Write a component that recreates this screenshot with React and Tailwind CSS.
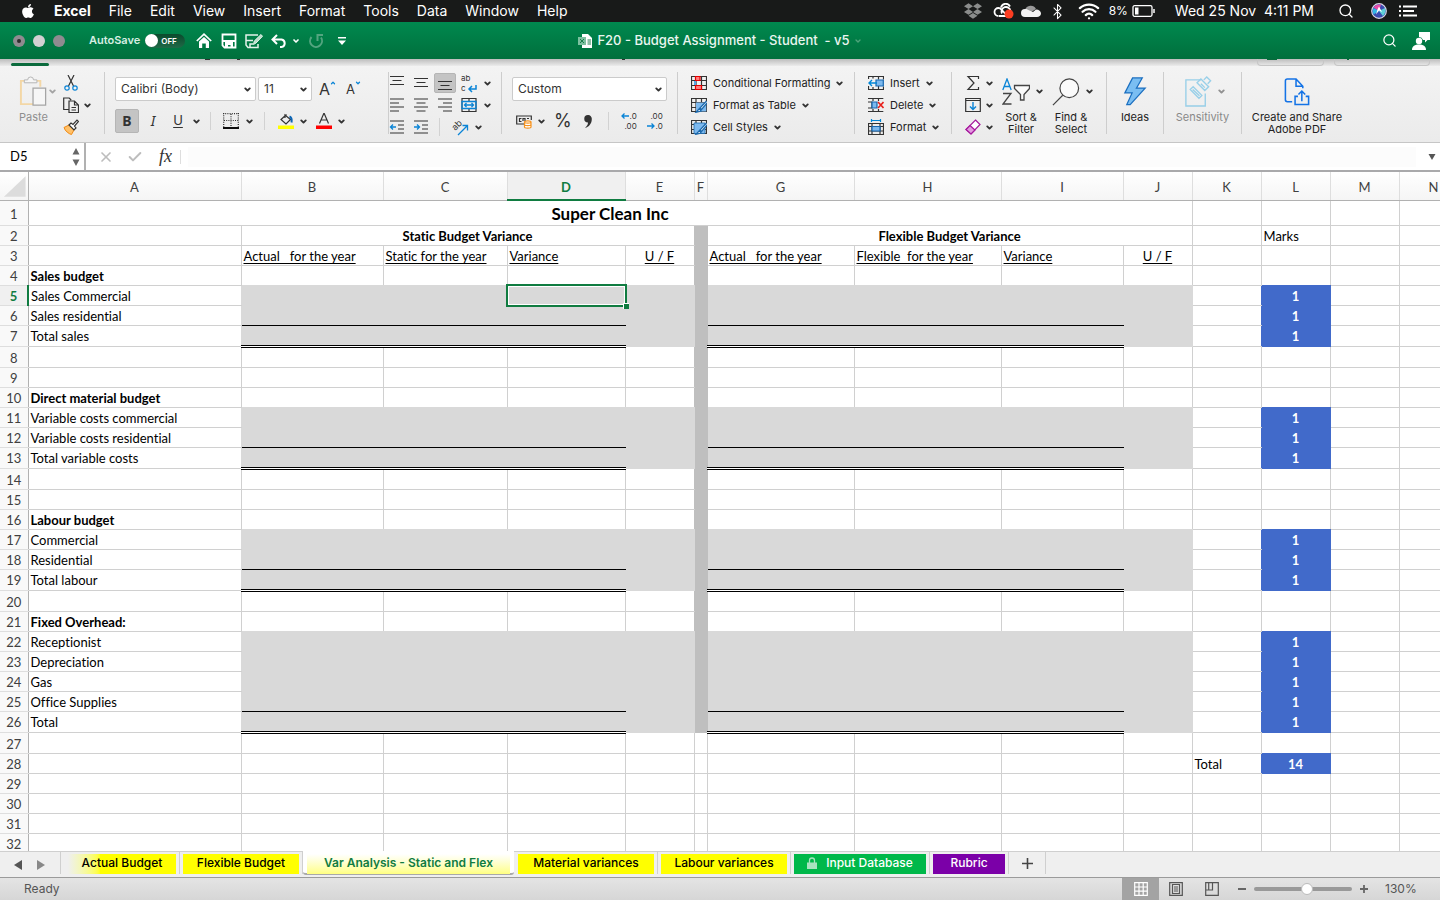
import { useState } from 'react';
import { FaApple, FaDropbox } from 'react-icons/fa';
import { Bluetooth, Check, ChevronDown, Search, Wifi, X } from 'lucide-react';

const GRID = '#d0d0d0';
const GREY = '#d9d9d9';
const BAND = '#bfbfbf';
const BLUE = '#416aca';

const COLUMNS = [
  { name: 'A', width: 213 },
  { name: 'B', width: 142 },
  { name: 'C', width: 124 },
  { name: 'D', width: 118 },
  { name: 'E', width: 69 },
  { name: 'F', width: 13 },
  { name: 'G', width: 147 },
  { name: 'H', width: 147 },
  { name: 'I', width: 122 },
  { name: 'J', width: 69 },
  { name: 'K', width: 69 },
  { name: 'L', width: 69 },
  { name: 'M', width: 69 },
  { name: 'N', width: 69 },
];

const BLOCKS = [
  [5, 7],
  [11, 13],
  [17, 19],
  [22, 26],
];

const LABELS = {
  4: 'Sales budget',
  5: 'Sales Commercial',
  6: 'Sales residential',
  7: 'Total sales',
  10: 'Direct material budget',
  11: 'Variable costs commercial',
  12: 'Variable costs residential',
  13: 'Total variable costs',
  16: 'Labour budget',
  17: 'Commercial',
  18: 'Residential',
  19: 'Total labour',
  21: 'Fixed Overhead:',
  22: 'Receptionist',
  23: 'Depreciation',
  24: 'Gas',
  25: 'Office Supplies',
  26: 'Total',
};

const HEADINGS = [4, 10, 16, 21];
const TALL_ROWS = [7, 8, 13, 14, 19, 20, 26, 27];

const SUBHEADS = {
  B: 'Actual   for the year',
  C: 'Static for the year',
  D: 'Variance',
  E: 'U / F',
  G: 'Actual   for the year',
  H: 'Flexible  for the year',
  I: 'Variance',
  J: 'U / F',
};

const MERGES = {
  1: { A: 10 },
  2: { B: 4, G: 4 },
};

const inBlock = (row) => BLOCKS.some(([from, to]) => row >= from && row <= to);
const isTotal = (row) => BLOCKS.some(([, to]) => to === row);

const fillOf = (row, col) => {
  if (!col) return null;
  if (col === 'F') return row >= 2 && row <= 26 ? BAND : null;
  if (col === 'L') return inBlock(row) || row === 28 ? BLUE : null;
  if ('BCDEGHIJ'.includes(col)) return inBlock(row) ? GREY : null;
  return null;
};

const textOf = (row, col) => {
  if (row === 1 && col === 'A') return 'Super Clean Inc';
  if (row === 2 && col === 'B') return 'Static Budget Variance';
  if (row === 2 && col === 'G') return 'Flexible Budget Variance';
  if (row === 2 && col === 'L') return 'Marks';
  if (row === 3) return SUBHEADS[col];
  if (row === 28 && col === 'K') return 'Total';
  if (row === 28 && col === 'L') return '14';
  if (col === 'A') return LABELS[row];
  if (col === 'L' && inBlock(row)) return '1';
  return null;
};

const textClass = (row, col) => {
  if (row === 1) return 'text-center text-[17px] font-bold';
  if (row === 2 && col !== 'L') return 'text-center text-[13px] font-bold';
  if (row === 3) return `text-[13px] underline underline-offset-2 ${col === 'E' || col === 'J' ? 'text-center' : 'text-left'}`;
  if (col === 'L' && row !== 2) return 'text-center text-[13px] font-bold text-white';
  if (HEADINGS.includes(row)) return 'text-left text-[13px] font-bold';
  return 'text-left text-[13px]';
};

const Cell = ({ row, index }) => {
  const col = COLUMNS[index].name;
  const span = MERGES[row]?.[col] ?? 1;
  const next = COLUMNS[index + span]?.name;
  const fill = fillOf(row, col);
  const ruled = 'BCDGHI'.includes(col);

  let bottom = `1px solid ${fillOf(row + 1, col) || fill || GRID}`;
  if (ruled && isTotal(row + 1)) bottom = '1px solid #000';
  if (ruled && isTotal(row)) bottom = '3px double #000';

  return (
    <td
      colSpan={span}
      className={`relative overflow-visible whitespace-pre px-[2px] pb-0 align-middle leading-4 ${isTotal(row) ? 'pt-0' : 'pt-[2px]'} ${textClass(row, col)}`}
      style={{
        backgroundColor: fill || '#fff',
        borderRight: `1px solid ${fill || fillOf(row, next) || GRID}`,
        borderBottom: bottom,
      }}
    >
      {textOf(row, col)}
      {row === 5 && col === 'D' && (
        <span className="absolute -inset-[2px] z-10 border-2 border-[#107c41] outline-1 -outline-offset-[3px] outline-white">
          <span className="absolute -bottom-[4px] -right-[4px] size-[6px] border-l border-t border-white bg-[#107c41]" />
        </span>
      )}
    </td>
  );
};

const SheetRow = ({ row }) => {
  const cells = [];
  for (let i = 0; i < COLUMNS.length; i += MERGES[row]?.[COLUMNS[i].name] ?? 1) {
    cells.push(<Cell key={i} row={row} index={i} />);
  }
  let height = 'h-5';
  if (row === 1) height = 'h-[25px]';
  if (TALL_ROWS.includes(row)) height = 'h-[21px]';

  return (
    <tr className={height}>
      <th
        scope="row"
        className={`border-b border-b-[#dedede] px-0 pb-0 text-center text-[13px] leading-4 ${isTotal(row) ? 'pt-0' : 'pt-[2px]'} ${
          row === 5
            ? 'border-r-2 border-r-[#107c41] bg-[#f0f0f0] font-bold text-[#107c41]'
            : 'border-r border-r-[#b1b1b1] bg-[#f9f9f9] font-normal text-[#404040]'
        }`}
      >
        {row}
      </th>
      {cells}
    </tr>
  );
};

const Sheet = () => (
  <main className="min-h-0 flex-1 overflow-hidden bg-white font-['Lato','Liberation_Sans',sans-serif] text-black [font-variant-ligatures:none]">
    <table className="w-[1467px] table-fixed border-collapse">
      <colgroup>
        <col className="w-7" />
        {COLUMNS.map((col) => (
          <col key={col.name} style={{ width: col.width }} />
        ))}
      </colgroup>
      <thead>
        <tr className="h-7 bg-linear-to-b from-white to-[#f5f5f5]">
          <th className="border-b border-r border-[#b1b1b1] p-0">
            <svg viewBox="0 0 28 27" className="block h-[27px] w-full" aria-label="Select all">
              <path d="M26 4v21H4z" fill="#dcdcdc" />
            </svg>
          </th>
          {COLUMNS.map((col) => (
            <th
              key={col.name}
              scope="col"
              className={`border-r border-r-[#dedede] px-0 pb-0 pt-[2px] text-center text-[13px] leading-4 ${
                col.name === 'D'
                  ? 'border-b-2 border-b-[#107c41] bg-[#f0f0f0] font-bold text-[#107c41]'
                  : 'border-b border-b-[#b1b1b1] font-normal text-[#404040]'
              }`}
            >
              {col.name}
            </th>
          ))}
        </tr>
      </thead>
      <tbody>
        {Array.from({ length: 32 }, (_, i) => (
          <SheetRow key={i} row={i + 1} />
        ))}
      </tbody>
    </table>
  </main>
);

const MENUS = ['File', 'Edit', 'View', 'Insert', 'Format', 'Tools', 'Data', 'Window', 'Help'];

const MenuBar = () => (
  <header className="flex h-[22px] shrink-0 items-center bg-[#181a19] text-[14px] leading-5 text-white">
    <FaApple className="ml-5 size-4" />
    <nav className="ml-[18px] flex gap-[18px]">
      <button type="button" className="font-bold">Excel</button>
      {MENUS.map((menu) => (
        <button key={menu} type="button">{menu}</button>
      ))}
    </nav>
    <div className="ml-auto flex items-center">
      <FaDropbox className="size-[18px] text-[#8b8d8c]" />
      <svg viewBox="0 0 22 16" className="ml-[11px] h-4 w-[22px]" fill="none" aria-label="Creative Cloud">
        <path d="M5.5 13a4 4 0 0 1 0-8c1 0 2 .5 3 1.5l4 4.5M9 10.5a4.500 4.500 0 1 1 4 2.500H6M8 4.500a4.800 4.800 0 0 1 9-1" stroke="#fff" strokeWidth="1.8" />
        <circle cx="16" cy="11" r="4.5" fill="#fc3d21" />
      </svg>
      <svg viewBox="0 0 20 14" className="ml-[6px] h-[14px] w-5" aria-label="OneDrive">
        <path d="M4 6a6 6 0 0 1 11-1l-8 5z" fill="#9a9a9a" />
        <path d="M4 13a4 4 0 0 1 0-8c2 0 3 .6 4.500 1.500L12 8l3-2.500c3 0 5 1.800 5 4S18 13 16 13z" fill="#f4f4f4" />
      </svg>
      <Bluetooth className="ml-2 size-[17px]" strokeWidth={1.5} />
      <Wifi className="ml-3 size-[22px]" strokeWidth={2.5} />
      <span className="ml-[9px] text-[12px]">8%</span>
      <svg viewBox="0 0 24 12" className="ml-1 h-3 w-6" fill="none" aria-label="Battery">
        <rect x="1" y=".7" width="19" height="10.6" rx="1.5" stroke="#fff" strokeWidth="1.3" />
        <path d="M3 2.5h3.500v7H3z" fill="#fff" />
        <path d="M22 4v4" stroke="#fff" strokeWidth="1.5" />
      </svg>
      <span className="ml-[19px] whitespace-pre text-[14px]">Wed 25 Nov  4:11 PM</span>
      <Search className="ml-6 size-4" strokeWidth={2} />
      <svg viewBox="0 0 16 16" className="ml-[17px] size-4" aria-label="Siri">
        <circle cx="8" cy="8" r="7.3" fill="#3b4bb0" stroke="#d9d9e6" strokeWidth="1.2" />
        <path d="M8 8 2.500 4.500Q5 1 10 1.500z" fill="#e84aa8" />
        <path d="M8 8 2.500 11.500Q.8 8 2.500 5z" fill="#35b7e6" />
        <path d="M8 8l6-3Q15.500 9 12 13z" fill="#5fd0d8" />
        <path d="M8 3.500 11 9 8 7.500 5 11.500l1.500-5z" fill="#fff" />
      </svg>
      <svg viewBox="0 0 18 12" className="ml-3 mr-[23px] h-3 w-[18px]" stroke="#fff" strokeWidth="1.8" aria-label="Notifications">
        <path d="M0 1.500h2M0 6h2M0 10.500h2M4 1.500h14M4 6h11M4 10.500h14" />
      </svg>
    </div>
  </header>
);

const TitleBar = () => (
  <div className="grid h-[37px] shrink-0 grid-cols-[1fr_auto_1fr] items-center bg-linear-to-b from-[#00894f] to-[#006f3c] text-white">
    <div className="flex items-center">
      <span className="ml-[13px] flex size-3 items-center justify-center rounded-full bg-[#8f8b90]">
        <span className="size-1 rounded-full bg-[#2d2d2d]" />
      </span>
      <span className="ml-2 size-3 rounded-full bg-[#d2d0d2]" />
      <span className="ml-2 size-3 rounded-full bg-[#8f8b90]" />
      <label htmlFor="autosave" className="ml-6 text-[11px] font-semibold text-[#d7eee2]">AutoSave</label>
      <span className="relative ml-[5px] flex h-[14px] w-10 items-center rounded-full bg-linear-to-b from-[#0b4a2d] to-[#1f6a47]">
        <input id="autosave" type="checkbox" role="switch" className="absolute inset-0 appearance-none" />
        <span className="size-[13px] rounded-full bg-white" />
        <span className="ml-[3px] text-[8px] font-semibold">OFF</span>
      </span>
      <button type="button" aria-label="Home" className="ml-[11px]">
        <svg viewBox="0 0 16 16" className="size-4" fill="none">
          <path d="M.8 8 8 1.200 15.200 8" stroke="#fff" strokeWidth="1.7" />
          <path d="M3 8.500 8 4l5 4.500V15H9.800v-4.500H6.200V15H3z" fill="#fff" />
        </svg>
      </button>
      <button type="button" aria-label="Save" className="ml-[9px]">
        <svg viewBox="0 0 16 16" className="size-4" fill="none" stroke="#fff" strokeWidth="1.8">
          <path d="M1.500 1.500h13v13h-11l-2-2zM1.500 8h13" />
          <path d="M4 9h8v6H9.500v-3H7v3H4z" fill="#fff" stroke="none" />
        </svg>
      </button>
      <button type="button" aria-label="Save as" className="ml-2">
        <svg viewBox="0 0 18 16" className="h-4 w-[18px]" fill="none" stroke="#e3f2ea" strokeWidth="1.5">
          <path d="M13 2H1v10l2 2.500h10V11M1 7.500h7M5 14v-3h3" />
          <path d="M8.500 11.500 9.300 8 16 1.500l1.500 1.800L11 10z" fill="#b9dcc9" strokeWidth="1" />
        </svg>
      </button>
      <button type="button" aria-label="Undo" className="ml-2">
        <svg viewBox="0 0 16 14" className="h-[14px] w-4" fill="none" stroke="#fff" strokeWidth="2">
          <path d="M6 1 1.500 5.500 6 10M2 5.500h8.500a3.800 3.800 0 0 1 0 7.500H9" />
        </svg>
      </button>
      <ChevronDown className="ml-[5px] size-2" strokeWidth={5} />
      <button type="button" aria-label="Redo" className="ml-2">
        <svg viewBox="0 0 16 16" className="size-4" fill="none" stroke="#54a580" strokeWidth="2">
          <path d="M3.500 4a6 6 0 1 0 9.500.5M9.500 8V2H15" />
        </svg>
      </button>
      <button type="button" aria-label="Customize toolbar" className="ml-[14px]">
        <svg viewBox="0 0 8 8" className="size-2" fill="#fff">
          <path d="M0 0h8v1.500H0zM0 3.500h8L4 8z" />
        </svg>
      </button>
    </div>
    <h1 className="flex items-center whitespace-pre text-[13px] font-medium text-[#eaf6f0]">
      <svg viewBox="0 0 14 14" className="mr-[5px] size-[14px]" aria-hidden="true">
        <path d="M4 0h6l4 4v10H4z" fill="#fff" />
        <path d="M0 3h8v8H0z" fill="#7cc09f" />
        <path d="m2 5 4 4m0-4L2 9M9.500 6H13M9.500 8H13M9.500 10H13" stroke="#1c7d4c" />
      </svg>
      F20 - Budget Assignment - Student  - v5
      <ChevronDown className="ml-1 size-2 text-[#4fa37b]" strokeWidth={4} />
    </h1>
    <div className="flex items-center justify-end gap-[15px] pr-[10px]">
      <Search className="size-[15px]" strokeWidth={2} />
      <svg viewBox="0 0 18 18" className="size-[18px]" fill="#fff" aria-label="Share">
        <path d="M7 0h11v8h-2.500L13 10.500V8H11A4.500 4.500 0 0 0 7 5z" />
        <circle cx="7" cy="9" r="3.2" />
        <path d="M0 18c0-4 3-5.500 7-5.500s7 1.500 7 5.500z" />
      </svg>
    </div>
  </div>
);

const Chevron = ({ className = '' }) => (
  <ChevronDown className={`size-[9px] shrink-0 text-[#333] ${className}`} strokeWidth={5} />
);

const Divider = () => <span className="h-[62px] w-px shrink-0 bg-[#cdcdcd]" />;
const SmallDivider = ({ className }) => <span className={`h-[18px] w-px shrink-0 bg-[#d2d2d2] ${className}`} />;

const Lines = ({ d, children }) => (
  <svg viewBox="0 0 16 16" className="size-4" fill="none" stroke="#333" strokeWidth="1.2">
    <path d={d} />
    {children}
  </svg>
);

const Picker = ({ label, value, className }) => (
  <span className={`relative flex h-6 items-center ${className}`}>
    <select
      aria-label={label}
      defaultValue={value}
      className="h-full w-full appearance-none rounded-[2px] border border-[#cbcbcb] bg-white pl-[5px] text-[12px] text-[#333]"
    >
      <option>{value}</option>
    </select>
    <Chevron className="pointer-events-none absolute right-1" />
  </span>
);

const GRID_FRAME = 'M.5 1.500h15v13H.5zM.5 5.500h15M.5 10.500h15M5 1.500v13M10.500 1.500v13';

const CondIcon = () => (
  <Lines d={GRID_FRAME}>
    <path d="M4.500 1.500H9v4H4.500zM4.500 10.500h6v4h-6z" fill="#ff8080" stroke="#e80000" />
    <path d="M3 6h2v4H3z" fill="#58a6e8" stroke="none" />
  </Lines>
);
const TableIcon = () => (
  <Lines d={GRID_FRAME}>
    <path d="M5 5.500h10.300v9H5z" fill="#7db9ee" stroke="none" />
    <path d="M15.500 4 9 11l1.500 1.500L16 6M8.500 11.500 5 15.300l5-1.300z" fill="#fff" stroke="#1b69ad" />
  </Lines>
);
const StyleIcon = () => (
  <Lines d={GRID_FRAME}>
    <path d="M3 4h11v10.500H3z" fill="#7db9ee" stroke="#1b69ad" strokeWidth=".8" />
    <path d="M15.500 4 9 11l1.500 1.500L16 6M8.500 11.500 5 15.300l5-1.300z" fill="#fff" stroke="#1b69ad" />
  </Lines>
);
const InsertIcon = () => (
  <Lines d="M.5 4V1.500h15v3M.5 11v3.500h15v-3M5 1.500v2M10.500 1.500v3M5 12v2.500M10.500 11v3.500">
    <path d="M8 5h7.300v6H8z" fill="#7db9ee" stroke="#1667b0" />
    <path d="M9 8H1M4 5 1 8l3 3" stroke="#0086d8" strokeWidth="1.4" />
  </Lines>
);
const DeleteIcon = () => (
  <Lines d="M0 1.500h15.300M0 14.500h15.300M5 1.500V4M10.500 1.500V4M5 12v2.500M10.500 12v2.500M0 5h4v6H0">
    <path d="M4 5h5v6H4z" fill="#7db9ee" stroke="#1667b0" />
    <path d="m10 5 5.500 6M15.500 5 10 11" stroke="#e8201c" strokeWidth="1.6" />
  </Lines>
);
const FormatIcon = () => (
  <Lines d="M.5 4.500h15v11H.5zM.5 7.500h15M.5 12h15M4 4.500v11M12 4.500v11">
    <path d="M4 7.500h8V12H4z" fill="#7db9ee" stroke="#1667b0" />
    <path d="M3.500 1.500h9M3.500 0v3M12.500 0v3" stroke="#0086d8" />
  </Lines>
);

const STYLE_ITEMS = [
  { label: 'Conditional Formatting', Icon: CondIcon },
  { label: 'Format as Table', Icon: TableIcon },
  { label: 'Cell Styles', Icon: StyleIcon },
];
const CELL_ITEMS = [
  { label: 'Insert', Icon: InsertIcon },
  { label: 'Delete', Icon: DeleteIcon },
  { label: 'Format', Icon: FormatIcon },
];

const ItemList = ({ items, className }) => (
  <div className={`shrink-0 pl-[13px] ${className}`}>
    {items.map(({ label, Icon }) => (
      <button key={label} type="button" className="flex h-[22px] items-center whitespace-nowrap text-[11px] text-[#222]">
        <Icon />
        <span className="ml-[6px]">{label}</span>
        <Chevron className="ml-[5px]" />
      </button>
    ))}
  </div>
);

const BigButton = ({ label, chevron, faded, className, children }) => (
  <button type="button" className={`flex shrink-0 flex-col items-center pt-1 ${faded ? 'opacity-50' : ''} ${className}`}>
    <span className={`flex h-[31px] items-center ${chevron ? 'pl-1' : ''}`}>
      {children}
      {chevron && <Chevron className="ml-[5px]" />}
    </span>
    <span className="mt-1 whitespace-pre text-center text-[11px] leading-3 text-[#222]">{label}</span>
  </button>
);

const Ribbon = () => (
  <section className="shrink-0 border-b border-[#c6c6c6] bg-linear-to-b from-[#f4f4f4] to-[#ebebeb]">
    <div className="flex h-[7px] items-start bg-linear-to-b from-[#bdbdbd] to-[#ececec]">
      <span className="ml-[11px] mt-1 h-[3px] w-[38px] rounded-full bg-[#0b6b3d]" />
      <span className="ml-[156px] h-px w-[5px] bg-[#333]" />
      <span className="ml-[27px] h-px w-[3px] bg-[#333]" />
      <span className="ml-[382px] h-px w-[3px] bg-[#333]" />
      <span className="ml-auto h-[7px] w-[67px] rounded-b border border-t-0 border-[#c6c6c6] pl-[9px]">
        <span className="block h-px w-[10px] bg-[#0b6b3d]" />
      </span>
      <span className="ml-[10px] mr-[10px] h-[7px] w-24 rounded-b border border-t-0 border-[#c6c6c6] pl-3">
        <span className="block h-px w-[2px] bg-[#0b6b3d]" />
      </span>
    </div>
    <div className="flex h-[76px] items-start overflow-hidden pt-[6px]">
      <div className="flex w-[104px] shrink-0">
        <button type="button" className="flex w-[51px] flex-col items-center pl-4 pt-1">
          <svg viewBox="0 0 30 32" className="h-[31px] w-[30px] shrink-0" fill="none">
            <path d="M5 5H1.500v24H14M18 5h3.500v6" stroke="#f3d7a6" strokeWidth="2" />
            <path d="M5 7V4h3.500a3 3 0 0 1 6 0H18v3z" stroke="#b5b5b5" fill="#f6f6f6" />
            <path d="M14 12.500h13V30H14z" stroke="#a5a5a5" fill="#f6f6f6" strokeWidth="1.3" />
          </svg>
          <span className="mt-1 text-[11px] leading-3 text-[#8e8e8e]">Paste</span>
        </button>
        <Chevron className="-ml-[3px] mt-[15px] opacity-40" />
        <div className="ml-[6px]">
          <button type="button" aria-label="Cut" className="flex h-[22px] items-center">
            <Lines d="M5 0l5.500 11M11 0 5.500 11">
              <circle cx="4" cy="13" r="2.2" stroke="#0a84d6" />
              <circle cx="12" cy="13" r="2.2" stroke="#0a84d6" />
            </Lines>
          </button>
          <button type="button" aria-label="Copy" className="flex h-[22px] items-center">
            <Lines d="M6 12.500H.7V1h5.500l2 2M6 4h5.500l4 4v7.500H6zM11.500 4v4h4M8.500 10.500h4.500M8.500 13h4.500" />
            <Chevron className="ml-1" />
          </button>
          <button type="button" aria-label="Format painter" className="flex h-[22px] items-center">
            <svg viewBox="0 0 16 16" className="size-4" fill="none">
              <path d="M1 8.500 6 6l5 5-2.500 4.500C6 15 2 12 1 8.500z" fill="#ffc069" stroke="#f08a12" />
              <path d="m6 6 2-2 2 1.500L14 1l1.500 1.500L11.500 7 13 9l-2 2z" fill="#fff" stroke="#333" strokeWidth="1.2" />
            </svg>
          </button>
        </div>
      </div>
      <Divider />
      <div className="w-[283px] shrink-0 pl-[10px] pt-[5px]">
        <div className="flex items-center">
          <Picker label="Font" value="Calibri (Body)" className="w-[141px]" />
          <Picker label="Font size" value="11" className="ml-[2px] w-[54px]" />
          <button type="button" aria-label="Increase font size" className="ml-[7px] flex text-[16px] leading-6 text-[#333]">
            A<ChevronDown className="mt-[3px] size-[6px] rotate-180 text-[#0a84d6]" strokeWidth={5} />
          </button>
          <button type="button" aria-label="Decrease font size" className="ml-[10px] flex text-[13px] leading-6 text-[#333]">
            A<ChevronDown className="mt-[3px] size-[6px] text-[#0a84d6]" strokeWidth={5} />
          </button>
        </div>
        <div className="mt-2 flex items-center text-[#333]">
          <button type="button" className="h-6 w-6 rounded-[2px] border border-[#b5b5b5] bg-[#c4c4c4] font-['Noto_Sans',sans-serif] text-[14px] font-bold leading-5">B</button>
          <button type="button" className="ml-1 w-5 font-['Noto_Sans',sans-serif] text-[14px] italic leading-5">I</button>
          <button type="button" className="ml-[5px] w-5 text-[13px] underline underline-offset-2">U</button>
          <Chevron className="ml-1" />
          <SmallDivider className="ml-[9px]" />
          <button type="button" aria-label="Borders" className="ml-3">
            <Lines d="M0 15h16">
              <path d="M.7 0v14M15.300 0v14M0 .7h16M8 1v13M1 7.500h14" strokeDasharray="1 1.2" />
              <path d="M0 15h16" stroke="#000" strokeWidth="1.8" />
            </Lines>
          </button>
          <Chevron className="ml-[6px]" />
          <SmallDivider className="ml-[10px]" />
          <button type="button" aria-label="Fill color" className="ml-[13px]">
            <Lines d="M8.500 1.500 3 6.500l5 4.500 4.500-4.500L7 2v3">
              <path d="M11.500 3.500c2.500 1 2.500 3 2 6" stroke="#0a64b5" strokeWidth="2" />
              <path d="M0 12.500h16V16H0z" fill="#ff0" stroke="none" />
            </Lines>
          </button>
          <Chevron className="ml-[5px]" />
          <button type="button" aria-label="Font color" className="ml-2">
            <Lines d="M3.500 10.500 8 0l4.500 10.500M5 7h6">
              <path d="M0 12.500h16V16H0z" fill="#f00" stroke="none" />
            </Lines>
          </button>
          <Chevron className="ml-[5px]" />
        </div>
      </div>
      <Divider />
      <div className="w-[112px] shrink-0">
        <div className="flex h-[22px] items-center gap-2">
          <button type="button" aria-label="Top align"><Lines d="M1 1.500h14M3.500 5.500h9M1 9.500h14" /></button>
          <button type="button" aria-label="Middle align"><Lines d="M1 3.500h14M3.500 7.500h9M1 11.500h14" /></button>
          <button type="button" aria-label="Bottom align" className="-mx-[3px] flex h-5 w-[22px] items-center justify-center rounded-[2px] border border-[#b5b5b5] bg-[#c4c4c4]">
            <Lines d="M1 6.500h14M3.500 10.500h9M1 14.500h14" />
          </button>
          <button type="button" aria-label="Wrap text" className="relative flex h-5 w-4 flex-col items-start text-[8px] leading-[10px] text-[#333]">
            <span>ab</span>
            <span>c</span>
            <svg viewBox="0 0 10 8" className="absolute bottom-0 right-0 h-2 w-[10px]" fill="none" stroke="#0a84d6" strokeWidth="1.5">
              <path d="M9 0v4H2M5 1 2 4l3 3" />
            </svg>
          </button>
          <Chevron className="-ml-[2px]" />
        </div>
        <div className="flex h-[22px] items-center gap-2">
          <button type="button" aria-label="Align left"><Lines d="M1 2h14M1 6h9M1 10h14M1 14h9" /></button>
          <button type="button" aria-label="Center"><Lines d="M1 2h14M3.500 6h9M1 10h14M3.500 14h9" /></button>
          <button type="button" aria-label="Align right"><Lines d="M1 2h14M6 6h9M1 10h14M6 14h9" /></button>
          <button type="button" aria-label="Merge cells">
            <Lines d="M1 1.500h14v13H1zM8 1.500v3M8 11.500v3">
              <path d="M1 4.500h14v7H1zM3.500 8h9M5.500 6l-2 2 2 2M10.500 6l2 2-2 2" stroke="#0a84d6" strokeWidth="1.3" />
            </Lines>
          </button>
          <Chevron className="-ml-[2px]" />
        </div>
        <div className="flex h-[22px] items-center gap-2">
          <button type="button" aria-label="Decrease indent">
            <Lines d="M1 2h14M9 6h6M9 10h6M1 14h14"><path d="M7 8H1.500M4 5.500 1.500 8 4 10.500" stroke="#0a84d6" strokeWidth="1.3" /></Lines>
          </button>
          <button type="button" aria-label="Increase indent">
            <Lines d="M1 2h14M9 6h6M9 10h6M1 14h14"><path d="M1 8h5.500M4 5.500 6.500 8 4 10.500" stroke="#0a84d6" strokeWidth="1.3" /></Lines>
          </button>
          <SmallDivider className="ml-[2px]" />
          <button type="button" aria-label="Orientation" className="ml-[3px]">
            <svg viewBox="0 0 18 18" className="size-[18px] overflow-visible" fill="none">
              <text x="1" y="11" transform="rotate(-45 5 8)" fontSize="9" fill="#333">ab</text>
              <path d="M7 17 16 8M11.500 7.500H16.500V12.500" stroke="#0a84d6" strokeWidth="1.3" />
            </svg>
          </button>
          <Chevron className="-ml-[3px]" />
        </div>
      </div>
      <Divider />
      <div className="w-[175px] shrink-0 pl-[10px] pt-[5px]">
        <Picker label="Number format" value="Custom" className="w-[155px]" />
        <div className="mt-2 flex h-6 items-center text-[#333]">
          <button type="button" aria-label="Currency" className="ml-1">
            <Lines d="M8 11H.7V3h14.600v4M5.500 5.500H3.500v3h2M9 8V5.500H7V8M11 5.500h2">
              <path d="M8.500 9v5c0 1.500 6.500 1.500 6.500 0V9c0-1.500-6.500-1.500-6.500 0c0 1.500 6.500 1.500 6.500 0M8.500 11.500c0 1.500 6.500 1.500 6.500 0" fill="#fff" stroke="#f7931e" />
            </Lines>
          </button>
          <Chevron className="ml-[5px]" />
          <button type="button" className="ml-2 text-[18px] leading-6">%</button>
          <button type="button" aria-label="Comma style" className="ml-3">
            <svg viewBox="0 0 8 13" className="h-[13px] w-2" fill="#333">
              <path d="M4 0a3.700 3.700 0 0 1 3.800 4C7.800 8.500 5 12 1 13c2-2 3-3.500 3-5.500A3.700 3.700 0 0 1 4 0z" />
            </svg>
          </button>
          <SmallDivider className="ml-4" />
          <button type="button" aria-label="Increase decimal" className="relative ml-3 flex w-4 flex-col items-end text-[8px] leading-[10px]">
            <span>.0</span>
            <span>.00</span>
            <svg viewBox="0 0 8 6" className="absolute left-0 top-[2px] h-[6px] w-2" fill="none" stroke="#0a84d6" strokeWidth="1.3"><path d="M8 3H1M3.500.5 1 3l2.500 2.500" /></svg>
          </button>
          <button type="button" aria-label="Decrease decimal" className="relative ml-[10px] flex w-4 flex-col items-end text-[8px] leading-[10px]">
            <span>.00</span>
            <span>.0</span>
            <svg viewBox="0 0 8 6" className="absolute bottom-[2px] left-0 h-[6px] w-2" fill="none" stroke="#0a84d6" strokeWidth="1.3"><path d="M0 3h7M4.500.5 7 3 4.500 5.500" /></svg>
          </button>
        </div>
      </div>
      <Divider />
      <ItemList items={STYLE_ITEMS} className="w-[176px]" />
      <Divider />
      <ItemList items={CELL_ITEMS} className="w-24" />
      <Divider />
      <div className="flex w-[154px] shrink-0 pl-[13px]">
        <div>
          <button type="button" aria-label="AutoSum" className="flex h-[22px] items-center">
            <Lines d="M13.500 4V1.500H3L9 8l-6 6.500h10.500V12" />
            <Chevron className="ml-1" />
          </button>
          <button type="button" aria-label="Fill" className="flex h-[22px] items-center">
            <Lines d="M.7 1.500h14.600v13H.7zM.7 3.500h14.600">
              <path d="M8 5v7.500M5 9.500l3 3 3-3" stroke="#0a84d6" strokeWidth="1.4" />
            </Lines>
            <Chevron className="ml-1" />
          </button>
          <button type="button" aria-label="Clear" className="flex h-[22px] items-center">
            <svg viewBox="0 0 16 16" className="size-4" fill="none" stroke="#a5189c" strokeWidth="1.2">
              <path d="M10.500 1 15 5.500 6 15 1 10.500z" fill="#fff" />
              <path d="M5 6.500 10 11 6 15 1 10.500z" fill="#e39ae0" />
            </svg>
            <Chevron className="ml-1" />
          </button>
        </div>
        <BigButton label={'Sort &\nFilter'} chevron className="ml-[5px] w-11">
          <svg viewBox="0 0 28 28" className="size-7 shrink-0" fill="none" strokeWidth="1.3">
            <path d="M.8 12 5 1l4.200 11M2.300 8.500h5.400" stroke="#0a84d6" />
            <path d="M1 15.500h8L1 26h8.500" stroke="#444" />
            <path d="M12.500 7.500h15v3l-5.500 6V22h-3.500v-5.500l-6-6z" stroke="#444" fill="#fafafa" />
          </svg>
        </BigButton>
        <BigButton label={'Find &\nSelect'} chevron className="ml-[6px] w-11">
          <svg viewBox="0 0 30 30" className="size-7 shrink-0" fill="none" stroke="#444" strokeWidth="1.3">
            <circle cx="18.5" cy="11" r="10" fill="#fafafa" />
            <path d="M11.500 18.500 1 29" />
          </svg>
        </BigButton>
      </div>
      <Divider />
      <BigButton label="Ideas" className="w-[56px]">
        <svg viewBox="0 0 24 30" className="h-[29px] w-6">
          <path d="M9.500 1h10l-6 10.500h9L7 28.500H3.500L9 16.500H1.500z" fill="#7abef2" stroke="#1b6fc0" strokeWidth="1.3" />
        </svg>
      </BigButton>
      <Divider />
      <BigButton label="Sensitivity" chevron faded className="w-[77px]">
        <svg viewBox="0 0 28 32" className="h-[31px] w-7" fill="none" stroke="#42b0e2" strokeWidth="1.4">
          <path d="M17 4H1.500v27h20V18" />
          <path d="m6 14 3-3 9 9-3 3zM8.500 14l7 6.500M13 7l4-4 8 8-4 4zM20 4l3-3 4 4-3 3M17 8l4 4" />
        </svg>
      </BigButton>
      <Divider />
      <BigButton label={'Create and Share\nAdobe PDF'} className="w-[110px]">
        <svg viewBox="0 0 26 30" className="mt-[2px] h-[29px] w-[26px]" fill="none" stroke="#1473e6" strokeWidth="1.6">
          <path d="M8 24.500H3A2 2 0 0 1 1 22.500V3A2 2 0 0 1 3 1h9l7 7.500v2M12 1v7.500h7" />
          <path d="M14 19h-3v8.500h14V19h-3M18 24V13.500M14.500 17 18 13.500l3.500 3.500" />
        </svg>
      </BigButton>
    </div>
  </section>
);

const FormulaBar = () => (
  <div className="flex h-7 shrink-0 items-center border-b border-[#a9a9ab] bg-white">
    <div className="flex h-full w-[86px] items-center border-r-2 border-[#b1b1b1] pr-1">
      <input aria-label="Name box" defaultValue="D5" className="min-w-0 flex-1 pl-[10px] font-['Lato',sans-serif] text-[13px] text-black" />
      <svg viewBox="0 0 8 18" className="h-[18px] w-2" fill="#666" aria-hidden="true">
        <path d="M4 0l3.500 6.500h-7zM4 18l3.500-6.500h-7z" />
      </svg>
    </div>
    <button type="button" aria-label="Cancel" className="ml-3"><X className="size-4 text-[#bdbdbd]" strokeWidth={2.5} /></button>
    <button type="button" aria-label="Enter" className="ml-[13px]"><Check className="size-4 text-[#bdbdbd]" strokeWidth={3} /></button>
    <button type="button" className="ml-4 font-['Liberation_Serif',serif] text-[18px] italic text-[#333]">fx</button>
    <span className="ml-2 h-[14px] w-px bg-[#dedede]" />
    <input aria-label="Formula" className="ml-[7px] h-5 min-w-0 flex-1 bg-[#fcfcfc]" />
    <svg viewBox="0 0 8 6" className="ml-3 mr-1 h-[6px] w-2" fill="#555" aria-hidden="true">
      <path d="M.5 0h7L4 6z" />
    </svg>
  </div>
);

const TABS = [
  { name: 'Actual Budget', look: 'w-[108px] bg-linear-to-r from-[#efefef] via-[#ff0] via-30% to-[#ff0] text-black' },
  { name: 'Flexible Budget', look: 'w-[116px] bg-[#ff0] text-black' },
  { name: 'Var Analysis - Static and Flex', look: 'w-[203px] bg-linear-to-b from-white to-[#ffff80] text-[#107c41]' },
  { name: 'Material variances', look: 'w-[136px] bg-[#ff0] text-black' },
  { name: 'Labour variances', look: 'w-[126px] bg-[#ff0] text-black' },
  { name: 'Input Database', look: 'w-[132px] bg-[#00b84a] text-white', locked: true },
  { name: 'Rubric', look: 'w-[72px] bg-[#7b00a8] text-white' },
];

const SheetTabs = ({ active, onSelect }) => (
  <nav className="flex h-[26px] shrink-0 items-start border-t border-[#cfcfcf] bg-[#efefef]" aria-label="Sheets">
    <button type="button" aria-label="Previous sheet" className="ml-[14px] mt-2">
      <svg viewBox="0 0 8 10" className="h-[10px] w-2" fill="#555"><path d="M8 0v10L0 5z" /></svg>
    </button>
    <button type="button" aria-label="Next sheet" className="ml-[15px] mt-2">
      <svg viewBox="0 0 8 10" className="h-[10px] w-2" fill="#888"><path d="M0 0v10l8-5z" /></svg>
    </button>
    <span className="ml-[15px] h-[22px] w-px bg-[#cfcfcf]" />
    <div className="ml-[7px] flex">
      {TABS.map((tab) => (
        <div
          key={tab.name}
          className={
            tab.name === active
              ? '-ml-[3px] -mt-px mr-1 h-6 rounded-b-[3px] border-b-2 border-b-[#a9a9a9] bg-white px-1 pt-[3px]'
              : 'mr-[3px] h-[22px] border-r border-[#cfcfcf] pr-[3px] pt-[2px]'
          }
        >
          <button
            type="button"
            onClick={() => onSelect(tab.name)}
            className={`flex h-5 items-center justify-center pb-[2px] text-[12px] ${tab.name === active ? 'font-semibold' : 'font-medium'} ${tab.look}`}
          >
            {tab.locked && (
              <svg viewBox="0 0 10 12" className="mr-[9px] h-3 w-[10px]" fill="#a8e3bf" aria-hidden="true">
                <path d="M0 5.500h10V12H0z" />
                <path d="M2.500 6V3.500a2.500 2.500 0 0 1 5 0V6" fill="none" stroke="#a8e3bf" strokeWidth="1.3" />
              </svg>
            )}
            {tab.name}
          </button>
        </div>
      ))}
    </div>
    <button type="button" aria-label="Add sheet" className="ml-[10px] mt-[6px]">
      <svg viewBox="0 0 11 11" className="size-[11px]" stroke="#444" strokeWidth="1.6"><path d="M5.500 0v11M0 5.500h11" /></svg>
    </button>
    <span className="ml-3 h-[22px] w-px bg-[#cfcfcf]" />
  </nav>
);

const StatusBar = () => {
  const [zoom, setZoom] = useState(130);
  return (
    <footer className="flex h-[23px] shrink-0 items-center border-t border-[#9b9b9b] bg-linear-to-b from-[#e4e4e4] to-[#d6d6d6] text-[12px] text-[#555]">
      <span className="ml-6">Ready</span>
      <button type="button" aria-label="Normal view" className="ml-auto flex h-full w-[37px] items-center justify-center bg-[#a3a3a3]">
        <svg viewBox="0 0 14 14" className="size-[14px]" fill="none" stroke="#fff" strokeWidth="1.2"><path d="M.7.7h12.600v12.600H.7zM5 .7v12.600M9.200.7v12.600M.7 5h12.600M.7 9.200h12.600" /></svg>
      </button>
      <button type="button" aria-label="Page layout view" className="ml-[10px]">
        <svg viewBox="0 0 14 14" className="size-[14px]" fill="none" stroke="#555" strokeWidth="1.2"><path d="M.7.7h12.600v12.600H.7zM3.500 2.500h7v9h-7zM5 5h4M5 7h4M5 9h4" /></svg>
      </button>
      <button type="button" aria-label="Page break view" className="ml-[22px]">
        <svg viewBox="0 0 14 14" className="size-[14px]" fill="none" stroke="#555" strokeWidth="1.2"><path d="M.7.7h12.600v12.600H.7zM7.500.7v7.300H.7M3.700.7V8" /></svg>
      </button>
      <span className="ml-[19px] h-[2px] w-2 bg-[#666]" />
      <input
        type="range"
        aria-label="Zoom"
        min="10"
        max="230"
        value={zoom}
        onChange={(event) => setZoom(Number(event.target.value))}
        className="ml-2 h-1 w-[98px] appearance-none rounded-full bg-[#999] [&::-webkit-slider-thumb]:size-3 [&::-webkit-slider-thumb]:appearance-none [&::-webkit-slider-thumb]:rounded-full [&::-webkit-slider-thumb]:border [&::-webkit-slider-thumb]:border-[#bbb] [&::-webkit-slider-thumb]:bg-white"
      />
      <svg viewBox="0 0 8 8" className="ml-2 size-2" stroke="#666" strokeWidth="1.8" aria-hidden="true"><path d="M4 0v8M0 4h8" /></svg>
      <span className="ml-[17px] w-[55px]">{zoom}%</span>
    </footer>
  );
};

const App = () => {
  const [active, setActive] = useState('Var Analysis - Static and Flex');
  return (
    <div className="flex h-screen flex-col overflow-hidden font-['Inter','Liberation_Sans',sans-serif]">
      <MenuBar />
      <TitleBar />
      <Ribbon />
      <FormulaBar />
      <div className="h-px shrink-0 border-b border-[#a9a9ab] bg-white" />
      <Sheet />
      <SheetTabs active={active} onSelect={setActive} />
      <StatusBar />
    </div>
  );
};

export default App;
